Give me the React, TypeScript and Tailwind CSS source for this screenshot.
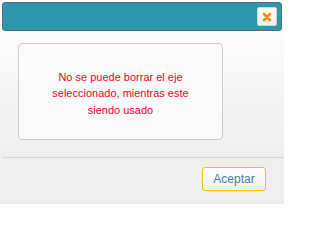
export default function App() {
  return (
    <div
      className="w-[284px] h-[204px] flex flex-col bg-[#eeeeee] overflow-hidden"
      style={{ fontFamily: '"Liberation Sans", Arial, sans-serif' }}
    >
      <div className="h-[157px] flex flex-col bg-gradient-to-b from-[#ffffff] to-[#eeeeee] pt-[2px] px-[2px]">
        {/* header */}
        <div className="h-[29px] flex items-center justify-end rounded-[3px] border border-[#5d6b70] bg-[#2e97ae] pr-[4px]">
          <button className="w-[20px] h-[19px] flex items-center justify-center rounded-[2px] border border-[#d0d0d0] bg-gradient-to-b from-[#ffffff] to-[#eeeeee]">
            <svg width="10" height="10" viewBox="0 0 10 10">
              <path d="M2 2 L8 8 M8 2 L2 8" stroke="#f08c00" strokeWidth="2.6" strokeLinecap="round" />
            </svg>
          </button>
        </div>
        {/* message */}
        <div className="mt-[12px] ml-[16px] w-[205px] h-[97px] flex items-center justify-center rounded-[4px] border border-[#cccccc] bg-[#fafafa] px-[24px] pt-[4px]">
          <p className="text-center text-[11px] leading-[16.5px] text-[#f5002e]">
            No se puede borrar el eje seleccionado, mientras este siendo usado
          </p>
        </div>
      </div>
      <div className="h-px bg-[#d6d6d6] ml-[2px]" />
      <div className="flex justify-end pt-[9px] pr-[18px]">
        <button className="w-[64px] h-[24px] rounded-[3px] border border-[#f5c400] bg-gradient-to-b from-[#ffffff] to-[#f0f0f0] text-[12px] text-[#4a7fa8]">
          Aceptar
        </button>
      </div>
    </div>
  );
}
